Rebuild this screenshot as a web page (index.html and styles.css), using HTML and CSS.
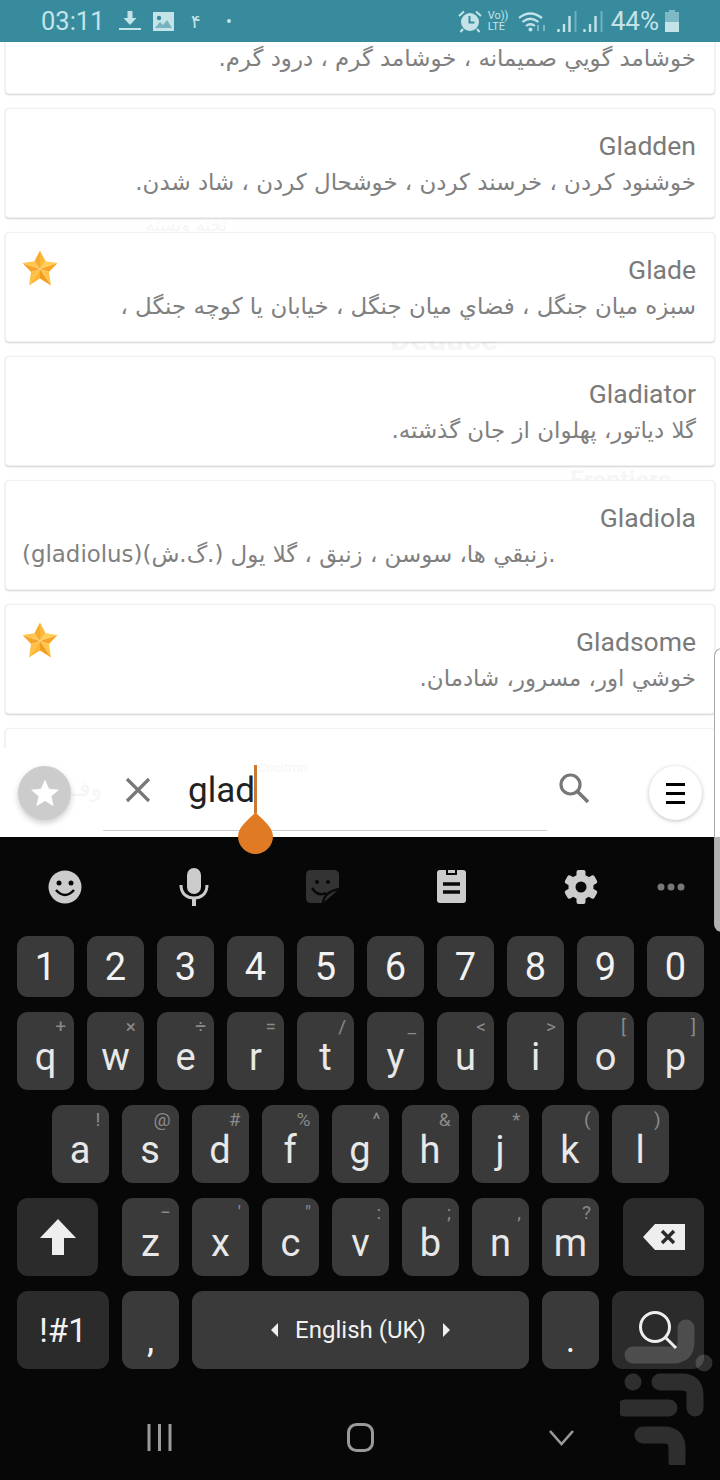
FILE: index.html

```html
<!DOCTYPE html>
<html lang="fa">
<head>
  <meta charset="UTF-8">
  <title>Dictionary search</title>
  <link rel="stylesheet" href="styles.css">
</head>
<body>
  <svg class="defs" width="0" height="0">
    <symbol id="gold-star" viewBox="0 0 36 36">
      <polygon points="18,19 18,0.500 23.600,11.300" fill="#ffb93a"/>
      <polygon points="18,19 23.600,11.300 35.500,13" fill="#ffd05a"/>
      <polygon points="18,19 35.500,13 27,21.900" fill="#f9a426"/>
      <polygon points="18,19 27,21.900 29,35.500" fill="#ffc64a"/>
      <polygon points="18,19 29,35.500 18,28.500" fill="#f59d1e"/>
      <polygon points="18,19 18,28.500 7,35.500" fill="#ffb62f"/>
      <polygon points="18,19 7,35.500 9,21.900" fill="#fbc04a"/>
      <polygon points="18,19 9,21.900 0.500,13" fill="#f7a52a"/>
      <polygon points="18,19 0.500,13 12.400,11.300" fill="#ffc54c"/>
      <polygon points="18,19 12.400,11.300 18,0.500" fill="#f8ab2e"/>
    </symbol>
  </svg>

  <div class="screen">
    <header class="status">
      <div class="status-left">
        <span class="time">03:11</span>
        <svg class="ic-download" width="22" height="20" viewBox="0 0 22 20"><path d="M8.500 0h5v7h4l-6.500 7-6.500-7h4z" fill="#c4e3e8"/><rect y="17" width="22" height="2" fill="#c4e3e8"/></svg>
        <svg class="ic-image" width="21" height="19" viewBox="0 0 21 19"><path d="M0 0h21v19H0z" fill="#c4e3e8"/><circle cx="6" cy="6" r="2.200" fill="#378b9d"/><path d="M2 16l5-6 3 3 4-5 5 8z" fill="#378b9d" opacity=".55"/></svg>
        <span class="notif-num">۴</span>
        <span class="notif-dot"></span>
      </div>
      <div class="status-right">
        <svg width="24" height="23" viewBox="0 0 24 23"><circle cx="12" cy="12" r="9" fill="#c4e3e8"/><path d="M11.500 6v6.500h5" fill="none" stroke="#378b9d" stroke-width="2"/><path d="M1 6l5-4.500M23 6l-5-4.500M5 19l-2.500 3M19 19l2.500 3" stroke="#c4e3e8" stroke-width="2"/></svg>
        <span class="volte"><span>Vo))</span><span>LTE</span></span>
        <svg class="ic-wifi" width="29" height="22" viewBox="0 0 29 22"><path d="M1 8q11-9 23 0M4.500 12q7.500-6.500 16 0M8 16q4.500-3.500 9 0" fill="none" stroke="#c4e3e8" stroke-width="2.200"/><circle cx="12.500" cy="19.500" r="2" fill="#c4e3e8"/><path d="M20 15v6M26 15v6" stroke="#8cc3ce" stroke-width="1.600"/></svg>
        <svg width="20" height="22" viewBox="0 0 20 22"><path d="M1.500 22v-3M7 22v-8M12.500 22V6" stroke="#c4e3e8" stroke-width="2.400"/><path d="M18.500 22V1" stroke="#6fb0be" stroke-width="2"/></svg>
        <svg width="20" height="22" viewBox="0 0 20 22"><path d="M1.500 22v-3M7 22v-8M12.500 22V6" stroke="#c4e3e8" stroke-width="2.400"/><path d="M18.500 22V1" stroke="#6fb0be" stroke-width="2"/></svg>
        <span class="battery-pct">44%</span>
        <svg width="14" height="22" viewBox="0 0 14 22"><path d="M4 0h6v2h4v20H0V2h4z" fill="#7fb9c5"/><rect y="12" width="14" height="10" fill="#c4e3e8"/></svg>
      </div>
    </header>

    <main class="list">
      <span class="ghost ghost-a">تخته وبسته</span>
      <span class="ghost ghost-b">Deduce</span>
      <span class="ghost ghost-c">Frontiers</span>

      <div class="card card-first">
        <div class="card-text">
          <div class="meaning">خوشامد گويي صميمانه ، خوشامد گرم ، درود گرم.</div>
        </div>
      </div>
      <div class="card">
        <div class="card-text">
          <div class="word">Gladden</div>
          <div class="meaning">خوشنود كردن ، خرسند كردن ، خوشحال كردن ، شاد شدن.</div>
        </div>
      </div>
      <div class="card">
        <svg class="fav"><use href="#gold-star"/></svg>
        <div class="card-text">
          <div class="word">Glade</div>
          <div class="meaning">سبزه ميان جنگل ، فضاي ميان جنگل ، خيابان يا كوچه جنگل ،</div>
        </div>
      </div>
      <div class="card">
        <div class="card-text">
          <div class="word">Gladiator</div>
          <div class="meaning">گلا دياتور، پهلوان از جان گذشته.</div>
        </div>
      </div>
      <div class="card">
        <div class="card-text">
          <div class="word">Gladiola</div>
          <div class="meaning meaning-left">.زنبقي ها، سوسن ، زنبق ، گلا يول (.گ.ش)(gladiolus)</div>
        </div>
      </div>
      <div class="card">
        <svg class="fav"><use href="#gold-star"/></svg>
        <div class="card-text">
          <div class="word">Gladsome</div>
          <div class="meaning">خوشي اور، مسرور، شادمان.</div>
        </div>
      </div>
      <div class="card"></div>
    </main>

    <section class="search">
      <span class="ghost ghost-d">Cnoitron</span>
      <span class="ghost ghost-e">وفـ</span>
      <button class="round-btn btn-fav">
        <svg width="30" height="30" viewBox="0 0 30 30"><path d="M15 1.500l4 9.300 10 .9-7.600 6.600 2.300 9.900-8.700-5.200-8.700 5.200 2.300-9.900L1 11.700l10-.9z" fill="#fff"/></svg>
      </button>
      <div class="field">
        <svg class="ic-clear" width="26" height="26" viewBox="0 0 26 26"><path d="M2 2l22 22M24 2L2 24" stroke="#777" stroke-width="3.200"/></svg>
        <span class="query">glad</span>
        <span class="caret"></span>
        <svg class="handle" width="35" height="42" viewBox="0 0 35 42"><path d="M17.500 0C23 7 35 14 35 24.500 35 34 27 42 17.500 42S0 34 0 24.500C0 14 12 7 17.500 0z" fill="#e07a25"/></svg>
      </div>
      <svg class="ic-search" width="32" height="32" viewBox="0 0 32 32"><circle cx="12.500" cy="12.500" r="9.500" fill="none" stroke="#777" stroke-width="3.200"/><path d="M19.500 19.500L30 30" stroke="#777" stroke-width="3.600"/></svg>
      <button class="round-btn btn-menu">
        <span class="bar"></span><span class="bar"></span><span class="bar"></span>
      </button>
    </section>

    <section class="keyboard">
      <div class="kb-tools">
        <svg width="34" height="34" viewBox="0 0 34 34"><circle cx="17" cy="17" r="16.500" fill="#ccc"/><circle cx="11" cy="13" r="2.500" fill="#090909"/><circle cx="23" cy="13" r="2.500" fill="#090909"/><path d="M8 20q9 10 18 0" fill="none" stroke="#090909" stroke-width="2.600"/></svg>
        <svg width="30" height="38" viewBox="0 0 30 38"><rect x="8" y="0" width="14" height="26" rx="7" fill="#ccc"/><path d="M2 17c0 9 6 13 13 13s13-4 13-13" fill="none" stroke="#ccc" stroke-width="3"/><path d="M15 30v8" stroke="#ccc" stroke-width="4"/></svg>
        <svg width="33" height="33" viewBox="0 0 33 33"><path d="M5 0h23q5 0 5 5v14L17 33H5q-5 0-5-5V5q0-5 5-5z" fill="#333"/><circle cx="11" cy="12" r="2" fill="#090909"/><circle cx="22" cy="12" r="2" fill="#090909"/><path d="M6 18q6 9 14 5M17 33q1-11 16-14" fill="none" stroke="#090909" stroke-width="2.400"/></svg>
        <svg width="29" height="33" viewBox="0 0 29 33"><path d="M3 0h23q3 0 3 3v27q0 3-3 3H3q-3 0-3-3V3q0-3 3-3z" fill="#ccc"/><path d="M9 0h11v5H9z" fill="#090909"/><path d="M11 0h7v3h-7z" fill="#ccc"/><path d="M6 14h17M6 22h17" stroke="#090909" stroke-width="3.400"/></svg>
        <svg width="34" height="34" viewBox="0 0 34 34">
          <circle cx="17" cy="17" r="12.500" fill="#ccc"/>
          <g fill="#ccc">
            <rect x="12.500" y="0" width="9" height="34" rx="2"/>
            <rect x="12.500" y="0" width="9" height="34" rx="2" transform="rotate(60 17 17)"/>
            <rect x="12.500" y="0" width="9" height="34" rx="2" transform="rotate(120 17 17)"/>
          </g>
          <circle cx="17" cy="17" r="5.500" fill="#090909"/>
        </svg>
        <svg width="28" height="8" viewBox="0 0 28 8"><circle cx="4" cy="4" r="3.500" fill="#777"/><circle cx="14" cy="4" r="3.500" fill="#777"/><circle cx="24" cy="4" r="3.500" fill="#777"/></svg>
      </div>

      <div class="kb-rows">
        <div class="kb-row kb-row-digits">
          <div class="key">1</div><div class="key">2</div><div class="key">3</div><div class="key">4</div><div class="key">5</div>
          <div class="key">6</div><div class="key">7</div><div class="key">8</div><div class="key">9</div><div class="key">0</div>
        </div>
        <div class="kb-row">
          <div class="key letter"><i>+</i>q</div><div class="key letter"><i>×</i>w</div><div class="key letter"><i>÷</i>e</div><div class="key letter"><i>=</i>r</div><div class="key letter"><i>/</i>t</div>
          <div class="key letter"><i>_</i>y</div><div class="key letter"><i>&lt;</i>u</div><div class="key letter"><i>&gt;</i>i</div><div class="key letter"><i>[</i>o</div><div class="key letter"><i>]</i>p</div>
        </div>
        <div class="kb-row kb-row-center">
          <div class="key letter"><i>!</i>a</div><div class="key letter"><i>@</i>s</div><div class="key letter"><i>#</i>d</div><div class="key letter"><i>%</i>f</div><div class="key letter"><i>^</i>g</div>
          <div class="key letter"><i>&amp;</i>h</div><div class="key letter"><i>*</i>j</div><div class="key letter"><i>(</i>k</div><div class="key letter"><i>)</i>l</div>
        </div>
        <div class="kb-row">
          <div class="key dark key-wide">
            <svg width="36" height="36" viewBox="0 0 36 36"><path d="M18 0l18 19H24v17H12V19H0z" fill="#eee"/></svg>
          </div>
          <div class="key letter key-after-wide"><i>−</i>z</div><div class="key letter"><i>'</i>x</div><div class="key letter"><i>"</i>c</div><div class="key letter"><i>:</i>v</div>
          <div class="key letter"><i>;</i>b</div><div class="key letter"><i>,</i>n</div><div class="key letter"><i>?</i>m</div>
          <div class="key dark key-wide key-back">
            <svg width="42" height="26" viewBox="0 0 42 26"><path d="M12 0h30v26H12L0 13z" fill="#eee"/><path d="M19 7l12 12M31 7L19 19" stroke="#2b2b2b" stroke-width="3.400"/></svg>
          </div>
        </div>
        <div class="kb-row">
          <div class="key dark key-sym">!#1</div>
          <div class="key key-punct">,</div>
          <div class="key key-space">
            <span class="arrow-l"></span><span class="lang">English (UK)</span><span class="arrow-r"></span>
          </div>
          <div class="key key-punct">.</div>
          <div class="key dark key-go">
            <svg width="40" height="40" viewBox="0 0 40 40"><circle cx="17" cy="17" r="14.500" fill="none" stroke="#eee" stroke-width="3"/><path d="M27 27l11 11" stroke="#eee" stroke-width="3"/></svg>
          </div>
        </div>
      </div>

      <nav class="sys-nav">
        <svg width="25" height="27" viewBox="0 0 25 27"><path d="M2 0v27M12.500 0v27M23 0v27" stroke="#9a9a9a" stroke-width="3"/></svg>
        <svg width="27" height="29" viewBox="0 0 27 29"><rect x="1.500" y="1.500" width="24" height="26" rx="8" fill="none" stroke="#9a9a9a" stroke-width="3"/></svg>
        <svg width="25" height="16" viewBox="0 0 25 16"><path d="M1 1l11.500 13L24 1" fill="none" stroke="#9a9a9a" stroke-width="2.600"/></svg>
      </nav>
    </section>

    <svg class="watermark" width="100" height="150" viewBox="620 1315 100 150">
      <g fill="none" stroke="#fff" stroke-opacity=".16" stroke-width="17" stroke-linecap="round">
        <path d="M686 1328v14q0 13-13 13h-40"/>
        <path d="M660 1382h22q13 0 13 13v13"/>
        <path d="M625 1408h44"/>
        <path d="M643 1435h21q13 0 13 13v14"/>
      </g>
      <circle cx="704" cy="1363" r="8.500" fill="#fff" fill-opacity=".16"/>
      <circle cx="633" cy="1382" r="8.500" fill="#fff" fill-opacity=".16"/>
    </svg>

    <div class="edge-panel"><div class="edge-panel-dark"></div></div>
  </div>
</body>
</html>
```

FILE: styles.css

```css
* { box-sizing: border-box; }
body { margin: 0; background: #fff; font-family: Roboto, sans-serif; }
.defs { position: absolute; }
.screen {
  position: relative;
  width: 720px;
  height: 1480px;
  overflow: hidden;
  display: flex;
  flex-direction: column;
}

/* status bar */
.status {
  height: 42px;
  flex: none;
  background-color: #378b9d;
  color: #c4e3e8;
  display: flex;
  justify-content: space-between;
  align-items: center;
  position: relative;
  z-index: 2;
}
.status-left { display: flex; align-items: center; padding-left: 41px; }
.time { font-size: 25.500px; width: 63px; }
.ic-download { margin-left: 15px; }
.ic-image { margin-left: 12px; }
.notif-num { font-family: "DejaVu Sans", sans-serif; font-size: 18px; margin-left: 17px; }
.notif-dot { width: 4px; height: 4px; border-radius: 50%; background: #c4e3e8; margin-left: 26px; }
.status-right { display: flex; align-items: center; padding-right: 41px; }
.volte {
  display: flex;
  flex-direction: column;
  font-size: 11px;
  line-height: 11px;
  width: 21px;
  margin-left: 6px;
}
.ic-wifi { margin-left: 9px; margin-right: 4px; }
.status-right svg + svg { margin-left: 6px; }
.battery-pct { font-size: 26px; margin-left: 8px; margin-right: 6px; }

/* results list */
.list {
  position: relative;
  height: 706px;
  flex: none;
  overflow: hidden;
  padding: 0 5px;
}
.card {
  position: relative;
  height: 110px;
  margin-bottom: 14px;
  padding: 19px 18px 0 16px;
  display: flex;
  background: #fff;
  border: 1px solid #f0f0f0;
  border-radius: 4px;
  box-shadow: 0 1px 2px rgba(0,0,0,0.18);
}
/* scrolled past the top of the list, only the meaning line still shows */
.card-first { margin-top: -58px; padding-top: 55px; }
.card-text { flex: 1; }
.fav { width: 36px; height: 36px; flex: none; margin-top: -2px; }
.word { font-size: 26.500px; line-height: 36px; color: #7a7a7a; text-align: right; }
.meaning {
  font-family: "DejaVu Sans", sans-serif;
  font-size: 22.900px;
  line-height: 36px;
  color: #808080;
  direction: rtl;
  text-align: right;
  white-space: nowrap;
}
.meaning-left { text-align: left; }
.ghost { position: absolute; color: #f6f6f6; white-space: nowrap; }
.ghost-a { left: 145px; top: 172px; font-size: 18px; font-family: "DejaVu Sans", sans-serif; }
.ghost-b { left: 390px; top: 278px; font-size: 32px; font-weight: 700; }
.ghost-c { left: 570px; top: 424px; font-size: 25px; font-weight: 700; }
.ghost-d { left: 258px; top: 12px; font-size: 13px; }
.ghost-e { left: 72px; top: 26px; font-size: 24px; font-family: "DejaVu Sans", sans-serif; }

/* search row */
.search {
  position: relative;
  z-index: 3;
  height: 89px;
  flex: none;
  display: flex;
  align-items: flex-start;
  padding: 18px 18px 0;
  background: #fff;
}
.round-btn {
  width: 53px;
  height: 54px;
  flex: none;
  border: none;
  border-radius: 50%;
  padding: 0;
  display: flex;
  flex-direction: column;
  align-items: center;
  justify-content: center;
  position: relative;
}
.btn-fav { background: #ccc; box-shadow: 0 3px 6px rgba(0,0,0,0.2); }
.btn-menu { background: #fff; margin-left: auto; gap: 6px; box-shadow: 0 1px 4px rgba(0,0,0,0.25); }
.bar { width: 19px; height: 3px; background: #000; }
.field {
  position: relative;
  width: 444px;
  height: 65px;
  margin-left: 32px;
  display: flex;
  align-items: center;
  border-bottom: 1px solid #ccc;
}
.ic-clear { margin-left: 22px; margin-top: -17px; }
.query { font-size: 35px; color: #222; margin-left: 37px; margin-top: -15px; }
.caret { position: absolute; left: 151px; top: -1px; width: 3px; height: 48px; background: #c87a35; }
.handle { position: absolute; left: 135px; top: 46px; }
.ic-search { margin-left: 11px; margin-top: 6px; }

/* keyboard */
.keyboard { flex: 1; background-color: #070707; position: relative; }
.kb-tools {
  height: 99px;
  display: grid;
  grid-template-columns: repeat(5, 129px) 52px;
  justify-items: center;
  align-items: center;
}
.kb-rows { padding: 0 16px 0 17px; display: flex; flex-direction: column; gap: 15px; }
.kb-row { display: flex; gap: 13px; height: 78px; }
.kb-row-digits { height: 61px; }
.kb-row-center { justify-content: center; padding-right: 1px; }
.key {
  position: relative;
  width: 57px;
  flex: none;
  display: flex;
  align-items: center;
  justify-content: center;
  background-color: #3a3a3a;
  border-radius: 11px;
  color: #f2f2f2;
  font-size: 38px;
}
.key.letter { align-items: flex-end; padding-bottom: 11px; line-height: 44px; color: #e8e8e8; }
.key i {
  position: absolute;
  top: 4px;
  right: 8px;
  font-style: normal;
  font-size: 19px;
  line-height: 22px;
  color: #8a8a8a;
}
.key.dark { background-color: #2b2b2b; }
.key-wide { width: 81px; }
.key-after-wide { margin-left: 11px; }
.key-back { margin-left: 11px; }
.key-sym { width: 92px; font-size: 33px; }
.key-punct { align-items: flex-end; padding-bottom: 8px; font-size: 36px; }
.key-space { width: 337px; gap: 17px; }
.key-go { width: 92px; padding-bottom: 1px; }
.lang { font-size: 24px; }
.arrow-l { border: 7px solid transparent; border-right: 7px solid #eee; border-left: none; }
.arrow-r { border: 7px solid transparent; border-left: 7px solid #eee; border-right: none; }

/* android nav buttons */
.sys-nav { display: flex; align-items: center; gap: 175px; height: 29px; padding-left: 147px; margin-top: 54px; }

/* store watermark and edge panel lie over everything */
.watermark { position: absolute; left: 620px; top: 1315px; z-index: 5; }
.edge-panel {
  position: absolute;
  left: 714px;
  top: 648px;
  width: 8px;
  height: 284px;
  z-index: 4;
  overflow: hidden;
  background: #fff;
  border: 1px solid #aaa;
  border-radius: 10px 0 0 10px;
  display: flex;
  flex-direction: column;
  justify-content: flex-end;
}
.edge-panel-dark { height: 94px; background: #b2b2b2; }
```
